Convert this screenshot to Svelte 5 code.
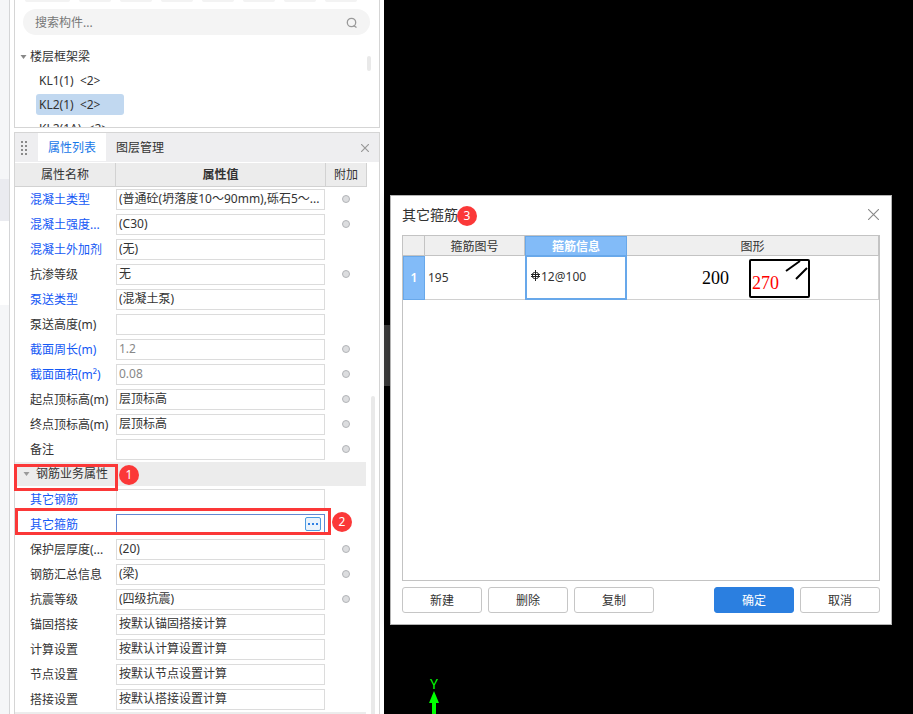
<script>
	const tree = ['KL1(1)  <2>', 'KL2(1)  <2>', 'KL2(1A)  <2>'];
	let selected = $state(1);

	const tools = [0, 1, 2, 3, 4, 5, 6, 7];

	const rows = [
		{ name: '混凝土类型', value: '(普通砼(坍落度10～90mm),砾石5～...', link: true, extra: true },
		{ name: '混凝土强度...', value: '(C30)', link: true, extra: true },
		{ name: '混凝土外加剂', value: '(无)', link: true },
		{ name: '抗渗等级', value: '无', extra: true },
		{ name: '泵送类型', value: '(混凝土泵)', link: true },
		{ name: '泵送高度(m)', value: '' },
		{ name: '截面周长(m)', value: '1.2', link: true, extra: true, dim: true },
		{ name: '截面面积(m²)', value: '0.08', link: true, extra: true, dim: true },
		{ name: '起点顶标高(m)', value: '层顶标高', extra: true },
		{ name: '终点顶标高(m)', value: '层顶标高', extra: true },
		{ name: '备注', value: '', extra: true },
		{ name: '钢筋业务属性', group: true },
		{ name: '其它钢筋', value: '', link: true },
		{ name: '其它箍筋', value: '', link: true, active: true },
		{ name: '保护层厚度(...', value: '(20)', extra: true },
		{ name: '钢筋汇总信息', value: '(梁)', extra: true },
		{ name: '抗震等级', value: '(四级抗震)', extra: true },
		{ name: '锚固搭接', value: '按默认锚固搭接计算' },
		{ name: '计算设置', value: '按默认计算设置计算' },
		{ name: '节点设置', value: '按默认节点设置计算' },
		{ name: '搭接设置', value: '按默认搭接设置计算' }
	];
</script>

<div class="app">
	<div class="rail">
		<span class="rail__top"></span>
		<span class="rail__active"></span>
		<span class="rail__blank"></span>
	</div>

	<aside class="side">
		<section class="members">
			<div class="members__tools">
				<span class="members__split"></span>
				{#each tools.slice(1) as tool (tool)}
					<span class="members__tool"></span>
				{/each}
			</div>
			<div class="search">
				<input type="text" placeholder="搜索构件..." aria-label="搜索构件" />
				<svg width="12" height="12" viewBox="0 0 12 12" fill="none" stroke="#999" stroke-width="1.3">
					<circle cx="5.5" cy="5.5" r="4.2" />
					<path d="M7.5 8.5 10.5 10.5" />
				</svg>
			</div>
			<div class="tree">
				<div class="tree__list">
					<div class="tree__root">
						<svg width="7" height="4" viewBox="0 0 7 4"><path d="M0.5 0H6.5L3.5 4Z" fill="#888" /></svg>
						楼层框架梁
					</div>
					{#each tree as item, i}
						<button class="tree__item" class:tree__item--on={selected === i} onclick={() => (selected = i)}>{item}</button>
					{/each}
				</div>
				<span class="tree__thumb"></span>
			</div>
		</section>

		<section class="props">
			<div class="tabs">
				<svg class="tabs__grip" width="6" height="14" viewBox="0 0 6 14" fill="#8a8a8a">
					{#each [0, 4, 8, 12] as y}
						<rect x="0" {y} width="2" height="2" />
						<rect x="4" {y} width="2" height="2" />
					{/each}
				</svg>
				<button class="tabs__tab tabs__tab--on">属性列表</button>
				<button class="tabs__tab">图层管理</button>
				<button class="tabs__close" aria-label="关闭">
					<svg width="8" height="8" viewBox="0 0 8 8" stroke="#999" stroke-width="1.2"><path d="M0 0 8 8M8 0 0 8" /></svg>
				</button>
			</div>
			<div class="props__body">
				<table class="grid">
					<colgroup>
						<col class="grid__c1" />
						<col />
						<col class="grid__c3" />
					</colgroup>
					<thead>
						<tr>
							<th>属性名称</th>
							<th class="grid__strong">属性值</th>
							<th>附加</th>
						</tr>
					</thead>
					<tbody>
						{#each rows as row, i}
							{#if row.group}
								<tr>
									<td class="grid__group" colspan="3">
										<div class="group">
											<svg width="7" height="4" viewBox="0 0 7 4"><path d="M0.5 0H6.5L3.5 4Z" fill="#999" /></svg>
											{row.name}
										</div>
										<span class="mark mark--group"></span>
										<span class="badge badge--one">1</span>
									</td>
								</tr>
							{:else}
								<tr>
									<td><label class:link={row.link} for="prop-{i}">{row.name}</label></td>
									<td>
										<div class="field" class:field--on={row.active}>
											<input id="prop-{i}" type="text" class:dim={row.dim} value={row.value} />
											{#if row.active}
												<button class="more" aria-label="更多">
													<svg width="10" height="2" viewBox="0 0 10 2" fill="#2f80e4"><path d="M0 0h2v2H0zM4 0h2v2H4zM8 0h2v2H8z" /></svg>
												</button>
											{/if}
										</div>
										{#if row.active}
											<span class="mark mark--row"></span>
											<span class="badge badge--two">2</span>
										{/if}
									</td>
									<td class="grid__extra">
										{#if row.extra}
											<span class="dot"></span>
										{/if}
									</td>
								</tr>
							{/if}
						{/each}
						<tr><td class="grid__group" colspan="3"><div class="group"></div></td></tr>
					</tbody>
				</table>
				<span class="props__thumb"></span>
			</div>
		</section>
	</aside>

	<main class="canvas">
		<span class="canvas__handle"></span>

		<svg class="axis" width="20" height="44" viewBox="0 0 20 44">
			<text x="10" y="19" text-anchor="middle" fill="#00ff00">Y</text>
			<path d="M10 21 15 33H12V44H8V33H5Z" fill="#00ff00" />
		</svg>

		<div class="dialog" role="dialog" aria-labelledby="dialog-title">
			<header class="dialog__head">
				<h2 id="dialog-title">其它箍筋</h2>
				<span class="badge">3</span>
				<button class="dialog__close" aria-label="关闭">
					<svg width="11" height="11" viewBox="0 0 11 11" stroke="#888" stroke-width="1.1"><path d="M0 0 11 11M11 0 0 11" /></svg>
				</button>
			</header>

			<div class="sheet">
				<table>
					<colgroup>
						<col class="sheet__c0" />
						<col class="sheet__c1" />
						<col class="sheet__c2" />
						<col />
					</colgroup>
					<thead>
						<tr>
							<th></th>
							<th>箍筋图号</th>
							<th class="sheet__on">箍筋信息</th>
							<th>图形</th>
						</tr>
					</thead>
					<tbody>
						<tr>
							<th class="sheet__on">1</th>
							<td>195</td>
							<td class="sheet__cell">
								<svg width="9" height="11" viewBox="0 0 9 11" fill="none" stroke="#222" stroke-width="1">
									<path d="M4.5 0V11M0 4.5H9M0 6.5H9" />
									<rect x="1.5" y="2.5" width="6" height="6" rx="2" />
								</svg>12@100
							</td>
							<td class="sheet__shape">
								<svg width="116" height="42" viewBox="0 0 116 42">
									<rect x="55" y="3" width="59" height="37" rx="1" fill="none" stroke="#000" stroke-width="2" />
									<path d="M91 14 105 4M101 22 112 11" fill="none" stroke="#000" stroke-width="2" />
									<text x="7" y="27" fill="#000">200</text>
									<text x="57" y="32" fill="#f00">270</text>
								</svg>
							</td>
						</tr>
					</tbody>
				</table>
			</div>

			<footer class="dialog__foot">
				<button>新建</button>
				<button>删除</button>
				<button>复制</button>
				<button class="primary">确定</button>
				<button>取消</button>
			</footer>
		</div>
	</main>
</div>

<style>
	:global(body) {
		background: #fff;
	}

	.app {
		display: flex;
		height: 100vh;
		overflow: hidden;
		color: #333;
		font-family: 'Noto Sans', 'Noto Sans CJK SC', sans-serif;
		font-size: 12px;
		line-height: 18px;
	}

	.app * {
		box-sizing: border-box;
	}

	button,
	input {
		margin: 0;
		padding: 0;
		border: 0;
		background: none;
		color: inherit;
		font: inherit;
		outline: none;
	}

	svg {
		display: block;
		flex: none;
	}

	table {
		width: 100%;
		border-collapse: separate;
		border-spacing: 0;
		table-layout: fixed;
	}

	th,
	td {
		padding: 0;
		font-weight: 400;
		text-align: left;
	}

	.rail {
		display: flex;
		flex-direction: column;
		flex: none;
		width: 10px;
		background: #f5f6f8;
		border-right: 1px solid #d4d5d7;
	}

	.rail__top {
		height: 179px;
	}

	.rail__active {
		height: 42px;
		background: #eaebf0;
	}

	.rail__blank {
		height: 84px;
		background: #fff;
	}

	.side {
		display: flex;
		flex-direction: column;
		flex: none;
		gap: 4px;
		width: 374px;
		padding: 0 4px;
	}

	.members {
		flex: none;
		height: 128px;
		overflow: hidden;
		border: 1px solid #d5d5d5;
		border-top: 0;
	}

	.members__tools {
		display: flex;
		gap: 9px;
		height: 2px;
		padding-left: 10px;
	}

	.members__split,
	.members__tool {
		width: 32px;
		background: #f3f3f3;
		border-radius: 0 0 3px 3px;
	}

	.members__split {
		width: 45px;
	}

	.search {
		display: flex;
		align-items: center;
		height: 26px;
		margin: 7px 9px 0 8px;
		padding: 1px 12px 0;
		border-radius: 13px;
		background: #f4f4f4;
	}

	.search input {
		flex: 1;
		min-width: 0;
		height: 20px;
	}

	.search input::placeholder {
		color: #777;
		opacity: 1;
	}

	.tree {
		display: flex;
		justify-content: space-between;
		padding: 10px 8px 0 5px;
	}

	.tree__root {
		display: flex;
		align-items: center;
		gap: 3px;
		height: 24px;
	}

	.tree__item {
		display: block;
		width: 88px;
		height: 21px;
		margin: 1px 0 3px 16px;
		padding-left: 3px;
		border-radius: 3px;
		text-align: left;
		white-space: pre;
	}

	.tree__item--on {
		background: #c1d8f0;
	}

	.tree__thumb {
		width: 4px;
		height: 15px;
		margin-top: 11px;
		border-radius: 2px;
		background: #e9e9e9;
	}

	.props {
		flex: 1;
		min-height: 0;
		border: 1px solid #d5d5d5;
		border-bottom: 0;
	}

	.tabs {
		display: flex;
		align-items: center;
		height: 29px;
		margin-bottom: 1px;
		padding: 0 4px 0 6px;
		background: #eeeef0;
	}

	.tabs__grip {
		margin-right: 11px;
	}

	.tabs__tab {
		width: 68px;
		height: 28px;
		padding-top: 2px;
		align-self: flex-start;
	}

	.tabs__tab--on {
		background: #fff;
		color: #1677e8;
	}

	.tabs__close {
		margin-left: auto;
		padding: 4px 6px;
	}

	.props__body {
		display: flex;
		gap: 4px;
	}

	.grid {
		flex: 1;
		min-width: 0;
	}

	.grid__c1 {
		width: 101px;
	}

	.grid__c3 {
		width: 41px;
	}

	.grid thead th {
		height: 24px;
		padding-top: 1px;
		border-right: 1px solid #d2d2d2;
		border-bottom: 1px solid #d2d2d2;
		background: #ececec;
		text-align: center;
	}

	.grid thead .grid__strong {
		font-weight: 600;
	}

	.grid tbody td {
		position: relative;
		height: 25px;
	}

	.grid tbody .grid__group {
		vertical-align: top;
	}

	.grid tbody .grid__extra {
		padding: 0 2px 2px 0;
	}

	.grid label {
		display: block;
		padding-left: 15px;
		white-space: nowrap;
	}

	.link {
		color: #1458f5;
	}

	.dim {
		color: #888;
	}

	.field {
		display: flex;
		height: 21px;
		margin-right: 1px;
		border: 1px solid #dcdcdc;
		background: #fff;
	}

	.field--on {
		padding-right: 3px;
		border-color: #6288d2;
	}

	.field input {
		flex: 1;
		min-width: 0;
		height: 18px;
		padding-left: 2px;
	}

	.more {
		display: flex;
		align-items: center;
		justify-content: center;
		width: 16px;
		height: 14px;
		margin-top: 2px;
		border: 1px solid #4d9ae0;
		border-radius: 2px;
		background: #eaf3fc;
	}

	.dot {
		display: block;
		width: 8px;
		height: 8px;
		margin: 0 auto;
		border: 1px solid #b2b4b8;
		border-radius: 50%;
		background: #dcdddf;
	}

	.group {
		display: flex;
		align-items: center;
		gap: 6px;
		height: 24px;
		margin-right: 1px;
		padding: 0 0 1px 8px;
		background: #ececec;
	}

	.props__thumb {
		width: 4px;
		margin: 233px 4px 0 0;
		border-radius: 2px;
		background: #e9e9e9;
	}

	.mark {
		position: absolute;
		z-index: 1;
		height: 27px;
		border: 3px solid #fb3838;
		pointer-events: none;
	}

	.mark--group {
		top: 2px;
		left: -1px;
		width: 104px;
	}

	.mark--row {
		top: -4px;
		left: -101px;
		right: -5px;
	}

	.badge {
		display: block;
		width: 20px;
		height: 20px;
		border-radius: 50%;
		background: #fb3838;
		color: #fff;
		line-height: 20px;
		text-align: center;
	}

	.badge--one {
		position: absolute;
		top: 3px;
		left: 104px;
	}

	.badge--two {
		position: absolute;
		top: 0;
		right: -26px;
		z-index: 1;
	}

	.canvas {
		position: relative;
		flex: 1;
		min-width: 0;
		background: #000;
	}

	.canvas__handle {
		position: absolute;
		top: 325px;
		left: 0;
		width: 8px;
		height: 61px;
		background: #3c3c3c;
	}

	.axis {
		position: absolute;
		bottom: 0;
		left: 40px;
		font-size: 14px;
	}

	.dialog {
		position: absolute;
		top: 195px;
		right: 21px;
		left: 6px;
		padding: 0 11px 11px;
		border: 1px solid #b4b4b4;
		background: #fff;
		box-shadow: 0 2px 10px rgba(0, 0, 0, 0.3);
	}

	.dialog__head {
		display: flex;
		align-items: center;
		height: 39px;
	}

	.dialog__head h2 {
		margin: 0;
		padding-bottom: 2px;
		font-size: 14px;
		font-weight: 400;
		line-height: 20px;
	}

	.dialog__head .badge {
		margin-left: -1px;
	}

	.dialog__close {
		margin-left: auto;
		padding: 1px 1px 3px;
	}

	.sheet {
		min-height: 346px;
		border: 1px solid #c3c3c3;
	}

	.sheet__c0 {
		width: 22px;
	}

	.sheet__c1 {
		width: 100px;
	}

	.sheet__c2 {
		width: 102px;
	}

	.sheet thead th {
		height: 20px;
		padding-top: 2px;
		border-right: 1px solid #c3c3c3;
		border-bottom: 1px solid #c3c3c3;
		background: #efefef;
		line-height: 16px;
		text-align: center;
	}

	.sheet tbody th,
	.sheet tbody td {
		height: 44px;
		border-bottom: 1px solid #d0d0d0;
	}

	.sheet tbody td {
		padding-left: 3px;
	}

	.sheet thead .sheet__on,
	.sheet tbody .sheet__on {
		border: 1px solid #68a8ea;
		background: #82bbf8;
		color: #fff;
		font-weight: 600;
		text-align: center;
	}

	.sheet tbody .sheet__cell {
		padding: 0 4px 2px;
		border: 2px solid #68a8ea;
		border-top-width: 1px;
	}

	.sheet__cell svg {
		display: inline-block;
		margin-right: 1px;
	}

	.sheet tbody .sheet__shape {
		padding: 0;
		border-right: 1px solid #d0d0d0;
	}

	.sheet__shape svg {
		margin: 0 auto;
		font-family: 'Liberation Serif', serif;
		font-size: 18px;
	}

	.dialog__foot {
		display: flex;
		gap: 6px;
		margin-top: 6px;
	}

	.dialog__foot button {
		width: 80px;
		height: 26px;
		padding-top: 2px;
		border: 1px solid #c6c6c6;
		border-radius: 3px;
		background: #fff;
	}

	.dialog__foot .primary {
		margin-left: auto;
		border-color: #2b7fe0;
		background: #2b7fe0;
		color: #fff;
	}
</style>
